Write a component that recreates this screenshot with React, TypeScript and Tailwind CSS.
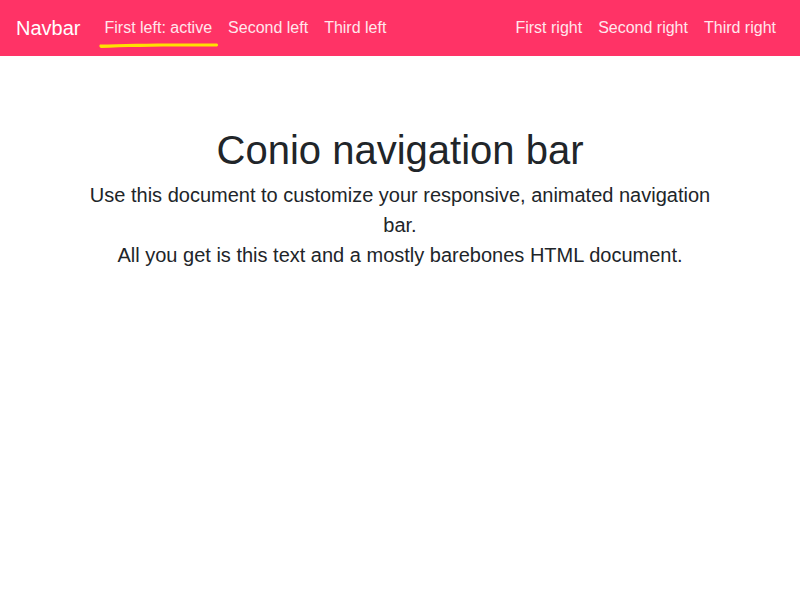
import React from 'react';

const leftLinks = ['First left: active', 'Second left', 'Third left'];
const rightLinks = ['First right', 'Second right', 'Third right'];

function Underline() {
  return (
    <svg className="absolute left-[3px] top-[25px]" width="120" height="8" viewBox="0 0 122 8" preserveAspectRatio="none">
      <path
        d="M1 3.6 C 30 2.4, 80 2.2, 120 2.6 C 121.5 3.4, 121.5 4.8, 120 5.6 C 80 5.2, 30 5.6, 2 7 C 0 6.2, 0 4.4, 1 3.6 Z"
        fill="#ffe100"
      />
    </svg>
  );
}

export default function App() {
  return (
    <div className="min-h-screen bg-white font-['Liberation_Sans',Arial,sans-serif] text-[#212529]">
      {/* Navbar */}
      <nav className="flex h-14 items-center bg-[#ff3366] px-4">
        <span className="mr-4 text-[20px] text-white">Navbar</span>
        <ul className="flex">
          {leftLinks.map((l, i) => (
            <li key={l} className="relative px-2 text-base text-[#ffe6ec]">
              {l}
              {i === 0 && <Underline />}
            </li>
          ))}
        </ul>
        <ul className="ml-auto flex">
          {rightLinks.map((l) => (
            <li key={l} className="px-2 text-base text-[#ffe6ec]">
              {l}
            </li>
          ))}
        </ul>
      </nav>

      {/* Content */}
      <main className="mx-auto w-[640px] pt-[70px] text-center">
        <h1 className="mb-[6px] text-[40px] leading-[1.2]">Conio navigation bar</h1>
        <p className="text-[20px] leading-[30px]">
          Use this document to customize your responsive, animated navigation bar.
          <br />
          All you get is this text and a mostly barebones HTML document.
        </p>
      </main>
    </div>
  );
}
